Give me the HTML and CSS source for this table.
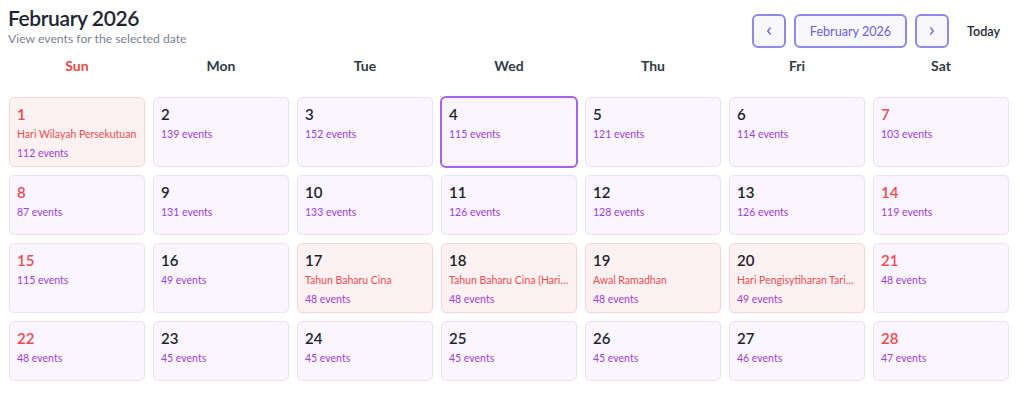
FILE: index.html
```html
<!DOCTYPE html>
<html lang="en">
<head>
<meta charset="utf-8">
<title>February 2026</title>
<link rel="stylesheet" href="styles.css">
</head>
<body>
<div class="app">
  <header class="top">
    <div class="titles">
      <h1 class="title">February 2026</h1>
      <p class="subtitle">View events for the selected date</p>
    </div>
    <div class="controls">
      <button class="btn icon" aria-label="Previous month">
        <svg width="10" height="10" viewBox="0 0 10 10"><path d="M6.3 1.8 L3.7 5 L6.3 8.2" fill="none" stroke="currentColor" stroke-width="1.3" stroke-linecap="round" stroke-linejoin="round"/></svg>
      </button>
      <button class="btn month">February 2026</button>
      <button class="btn icon" aria-label="Next month">
        <svg width="10" height="10" viewBox="0 0 10 10"><path d="M3.7 1.8 L6.3 5 L3.7 8.2" fill="none" stroke="currentColor" stroke-width="1.3" stroke-linecap="round" stroke-linejoin="round"/></svg>
      </button>
      <button class="today">Today</button>
    </div>
  </header>

  <div class="weekdays">
    <div class="wd weekend-sun">Sun</div>
    <div class="wd">Mon</div>
    <div class="wd">Tue</div>
    <div class="wd">Wed</div>
    <div class="wd">Thu</div>
    <div class="wd">Fri</div>
    <div class="wd">Sat</div>
  </div>

  <div class="grid">
    <div class="cell holiday"><div class="num red">1</div><div class="hname">Hari Wilayah Persekutuan</div><div class="ev">112 events</div></div>
    <div class="cell"><div class="num">2</div><div class="ev">139 events</div></div>
    <div class="cell"><div class="num">3</div><div class="ev">152 events</div></div>
    <div class="cell selected"><div class="num">4</div><div class="ev">115 events</div></div>
    <div class="cell"><div class="num">5</div><div class="ev">121 events</div></div>
    <div class="cell"><div class="num">6</div><div class="ev">114 events</div></div>
    <div class="cell"><div class="num red">7</div><div class="ev">103 events</div></div>

    <div class="cell"><div class="num red">8</div><div class="ev">87 events</div></div>
    <div class="cell"><div class="num">9</div><div class="ev">131 events</div></div>
    <div class="cell"><div class="num">10</div><div class="ev">133 events</div></div>
    <div class="cell"><div class="num">11</div><div class="ev">126 events</div></div>
    <div class="cell"><div class="num">12</div><div class="ev">128 events</div></div>
    <div class="cell"><div class="num">13</div><div class="ev">126 events</div></div>
    <div class="cell"><div class="num red">14</div><div class="ev">119 events</div></div>

    <div class="cell"><div class="num red">15</div><div class="ev">115 events</div></div>
    <div class="cell"><div class="num">16</div><div class="ev">49 events</div></div>
    <div class="cell holiday"><div class="num">17</div><div class="hname">Tahun Baharu Cina</div><div class="ev">48 events</div></div>
    <div class="cell holiday"><div class="num">18</div><div class="hname">Tahun Baharu Cina (Hari Kedua)</div><div class="ev">48 events</div></div>
    <div class="cell holiday"><div class="num">19</div><div class="hname">Awal Ramadhan</div><div class="ev">48 events</div></div>
    <div class="cell holiday"><div class="num">20</div><div class="hname">Hari Pengisytiharan Tarikh Kemerdekaan</div><div class="ev">49 events</div></div>
    <div class="cell"><div class="num red">21</div><div class="ev">48 events</div></div>

    <div class="cell"><div class="num red">22</div><div class="ev">48 events</div></div>
    <div class="cell"><div class="num">23</div><div class="ev">45 events</div></div>
    <div class="cell"><div class="num">24</div><div class="ev">45 events</div></div>
    <div class="cell"><div class="num">25</div><div class="ev">45 events</div></div>
    <div class="cell"><div class="num">26</div><div class="ev">45 events</div></div>
    <div class="cell"><div class="num">27</div><div class="ev">46 events</div></div>
    <div class="cell"><div class="num red">28</div><div class="ev">47 events</div></div>
  </div>
</div>
</body>
</html>
```

FILE: styles.css
```css
* { box-sizing: border-box; }
html, body { margin: 0; padding: 0; background: #ffffff; }
body {
  font-family: Lato, "Noto Sans", sans-serif;
  color: #1f2937;
}
.app {
  width: 1024px;
  padding: 4px 14px 0 9px;
}
.top {
  display: flex;
  justify-content: space-between;
  align-items: flex-start;
  margin-left: -1px;
}
.title {
  margin: 0;
  font-size: 21px;
  line-height: 28px;
  font-weight: 600;
  color: #1e2433;
  letter-spacing: -0.4px;
}
.subtitle {
  margin: 0;
  font-size: 12.2px;
  line-height: 14px;
  color: #7b8394;
}
.controls {
  display: flex;
  align-items: center;
  gap: 8px;
  margin-top: 10px;
}
.btn {
  height: 34px;
  border: 2px solid #8f88ef;
  background: #f8f7fc;
  border-radius: 6px;
  color: #6a5fe2;
  font-family: inherit;
  font-size: 12.6px;
  display: flex;
  align-items: center;
  justify-content: center;
  padding: 0;
  cursor: pointer;
}
.btn.icon { width: 34px; }
.btn.month { width: 113px; }
.today {
  width: 53px;
  border: none;
  background: none;
  font-family: inherit;
  font-size: 12.6px;
  font-weight: 600;
  color: #1f2937;
  padding: 0;
  height: 34px;
  text-align: center;
  cursor: pointer;
}
.weekdays {
  display: grid;
  grid-template-columns: repeat(7, 1fr);
  column-gap: 8px;
  width: 1000px;
  margin-top: 4px;
  margin-bottom: 17px;
}
.wd {
  text-align: center;
  font-size: 14px;
  line-height: 28px;
  font-weight: 700;
  color: #333a47;
}
.wd.weekend-sun { color: #f0474b; }
.grid {
  display: grid;
  grid-template-columns: repeat(7, 1fr);
  gap: 8px 8px;
  width: 1000px;
}
.cell {
  min-height: 60px;
  background: #faf5ff;
  border: 1px solid #ecdffc;
  border-radius: 5px;
  padding: 6px 7px 3px;
  overflow: hidden;
}
.cell.holiday {
  background: #fef1f1;
  border-color: #fdd2d2;
}
.cell.selected {
  border: 2px solid #a661f2;
  margin: -1px;
  padding: 6px 7px 3px;
  border-radius: 6px;
}
.num {
  font-size: 15px;
  line-height: 20px;
  font-weight: 600;
  color: #1f2430;
}
.num.red { color: #ef4b50; }
.hname {
  font-size: 10.5px;
  line-height: 19px;
  color: #ee4e52;
  white-space: nowrap;
  overflow: hidden;
  text-overflow: ellipsis;
  margin-top: 1px;
}
.ev {
  font-size: 10.5px;
  line-height: 19px;
  color: #9a3ee8;
  white-space: nowrap;
}
.num + .ev { margin-top: 1px; }
```
